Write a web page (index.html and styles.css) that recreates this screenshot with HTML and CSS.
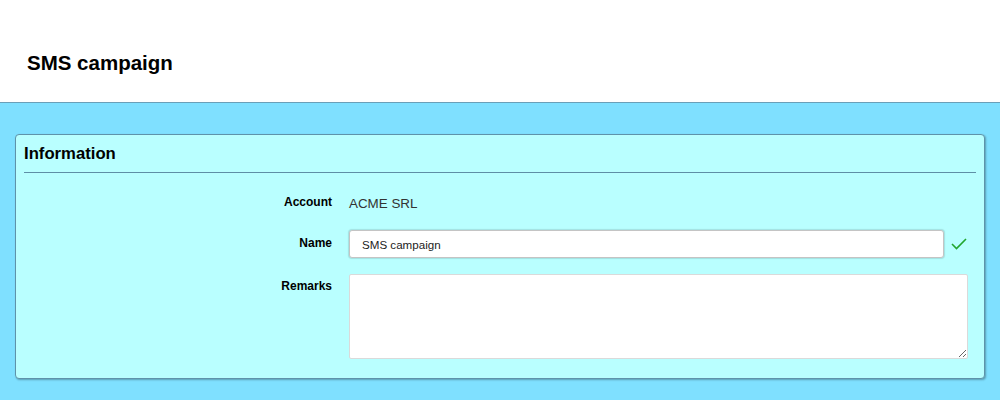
FILE: index.html
```html
<!DOCTYPE html>
<html>
<head>
<meta charset="utf-8">
<link rel="stylesheet" href="styles.css">
</head>
<body>
<header class="top">
  <h1 class="title">SMS campaign</h1>
</header>
<main class="content">
  <section class="panel">
    <h2 class="panel-title">Information</h2>
    <div class="form">
      <div class="label row-account">Account</div>
      <div class="value row-account">ACME SRL</div>
      <div class="label row-name">Name</div>
      <div class="value row-name">
        <input class="input" type="text" value="SMS campaign">
        <svg class="check" width="16" height="12" viewBox="0 0 16 12"><path d="M1 6 L5.5 10.5 L15 1" fill="none" stroke="#22a52e" stroke-width="1.6"/></svg>
      </div>
      <div class="label row-remarks">Remarks</div>
      <div class="value row-remarks">
        <textarea class="textarea"></textarea>
      </div>
    </div>
  </section>
</main>
</body>
</html>
```
FILE: styles.css
```css
html, body {
  margin: 0;
  padding: 0;
  height: 100%;
}
body {
  background: #7fe0ff;
  font-family: "Liberation Sans", Arial, sans-serif;
  color: #000;
}
.top {
  background: #fff;
  height: 103px;
  box-sizing: border-box;
  border-bottom: 1px solid #6a9fb8;
  padding: 51px 0 0 27px;
}
.title {
  margin: 0;
  font-size: 20.5px;
  line-height: 24px;
  font-weight: bold;
}
.content {
  padding: 31px 15px 0 15px;
}
.panel {
  background: #b9ffff;
  border: 1px solid #5e93aa;
  border-radius: 4px;
  box-shadow: 1px 1px 2px rgba(0, 0, 0, 0.3);
  padding: 0 15px 19px 8px;
}
.panel-title {
  margin: 0 -7px 0 0;
  font-size: 16.7px;
  font-weight: bold;
  height: 37px;
  line-height: 38px;
  border-bottom: 1px solid #5e8fa6;
}
.form {
  display: grid;
  grid-template-columns: 308px 1fr;
  column-gap: 17px;
  row-gap: 15px;
  padding-top: 14px;
}
.label {
  text-align: right;
  font-size: 12px;
  font-weight: bold;
}
.row-account {
  height: 28px;
}
.label.row-account {
  line-height: 30px;
}
.value.row-account {
  font-size: 13.4px;
  color: #333;
  line-height: 34px;
}
.label.row-name {
  line-height: 26px;
}
.value.row-name {
  display: flex;
  align-items: center;
  height: 28px;
}
.input {
  box-sizing: border-box;
  width: 595px;
  height: 28px;
  border: 1px solid #c4c4c4;
  border-radius: 3px;
  box-shadow: 0 0 1px 1px rgba(0, 0, 0, 0.12);
  padding: 0 0 0 12px;
  margin: 0;
  font-family: "Liberation Sans", Arial, sans-serif;
  font-size: 11.6px;
  color: #222;
  background: #fff;
  outline: none;
}
.check {
  margin-left: 7px;
  display: block;
}
.label.row-remarks {
  line-height: 20px;
  padding-top: 2px;
}
.row-remarks {
  margin-top: 1px;
}
.textarea {
  box-sizing: border-box;
  display: block;
  width: 619px;
  height: 85px;
  margin: 0;
  border: 1px solid #dadada;
  border-radius: 2px;
  background: #fff;
  font-family: "Liberation Sans", Arial, sans-serif;
  font-size: 12px;
}
```
